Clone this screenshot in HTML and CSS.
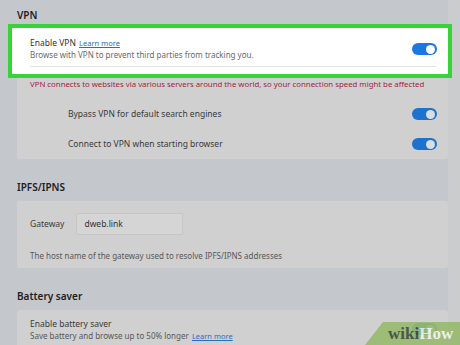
FILE: index.html
```html
<!DOCTYPE html>
<html lang="en">
<head>
    <meta charset="UTF-8">
    <meta name="viewport" content="width=device-width, initial-scale=1.0">
    <title>Settings</title>
    <link rel="stylesheet" href="styles.css">
</head>
<body>
<div class="layout">
    <div class="main">

        <!-- VPN -->
        <h2 class="heading">VPN</h2>
        <div class="card">
            <div class="row highlight">
                <div class="row-text">
                    <div class="title">Enable VPN <a class="link" href="#">Learn more</a></div>
                    <div class="desc">Browse with VPN to prevent third parties from tracking you.</div>
                </div>
                <span class="toggle on"></span>
                <div class="sep"></div>
            </div>
            <div class="note">VPN connects to websites via various servers around the world, so your connection speed might be affected</div>
            <div class="row sub">
                <span class="label">Bypass VPN for default search engines</span>
                <span class="toggle"></span>
            </div>
            <div class="row sub">
                <span class="label">Connect to VPN when starting browser</span>
                <span class="toggle"></span>
            </div>
        </div>

        <!-- IPFS -->
        <h2 class="heading spaced">IPFS/IPNS</h2>
        <div class="card padded">
            <div class="field">
                <span class="label">Gateway</span>
                <span class="input">dweb.link</span>
            </div>
            <div class="desc hint">The host name of the gateway used to resolve IPFS/IPNS addresses</div>
        </div>

        <!-- Battery -->
        <h2 class="heading spaced">Battery saver</h2>
        <div class="card battery">
            <div class="row-text">
                <div class="label">Enable battery saver</div>
                <div class="desc">Save battery and browse up to 50% longer <a class="link" href="#">Learn more</a></div>
            </div>
            <span class="toggle"></span>
        </div>

    </div>
    <div class="rail"></div>
</div>

<div class="watermark">
    <svg class="wm-bg" width="95" height="23" viewBox="0 0 95 23"><polygon points="0,23 18,0 95,0 95,23" fill="#98ba6e"/></svg>
    <span class="wm-text"><span class="wm-wiki">wiki</span><span class="wm-how">How</span></span>
</div>
</body>
</html>
```

FILE: styles.css
```css
body {
    margin: 0;
    background: #c4c7cb;
    font-family: "Noto Sans", "Open Sans", sans-serif;
    font-size: 8px;
    color: #3a3a3a;
    overflow: hidden;
}

.layout {
    display: flex;
    height: 345px;
}

.main {
    flex: 1;
    padding: 9px 0 0 17px;
}

.rail {
    width: 12px;
    background: #cbcccd;
}

.heading {
    margin: 0 0 3px 0;
    font-size: 10px;
    line-height: 12px;
    font-weight: 600;
    color: #1e1e1e;
}

.heading.spaced {
    margin-top: 22px;
    margin-bottom: 8px;
}

.card {
    background: #d0d0d0;
    border-radius: 3px;
}

.card.padded {
    padding: 12px 13px 6px 13px;
}

.row {
    display: flex;
    align-items: center;
    justify-content: space-between;
}

.highlight {
    position: relative;
    flex-wrap: wrap;
    margin: 0 -4px 0 -9px;
    padding: 9px 11px 0 18px;
    background: #ffffff;
    border: 4px solid #3ad23a;
}

.highlight .title {
    color: #333;
}

.highlight .desc {
    color: #6a6a6a;
}

.sep {
    flex-basis: 100%;
    height: 1px;
    margin: 5px 1px 7px 0;
    background: #e4e4e4;
}

.title, .label {
    line-height: 12px;
    font-size: 8.5px;
}

.desc {
    line-height: 12px;
    color: #585858;
}

.link {
    margin-left: 1px;
    color: #2b6ec0;
    font-size: 7.5px;
}

.note {
    padding-left: 13px;
    margin-bottom: 9px;
    line-height: 12px;
    font-size: 7.8px;
    color: #a2243a;
}

.sub {
    height: 30px;
    padding: 0 11px 0 51px;
}

.toggle {
    position: relative;
    width: 25px;
    height: 12px;
    border-radius: 6px;
    background: #1c72cf;
    flex-shrink: 0;
}

.toggle::after {
    content: "";
    position: absolute;
    right: 2px;
    top: 1.5px;
    width: 9px;
    height: 9px;
    border-radius: 50%;
    background: #d9dde4;
}

.toggle.on {
    background: #1a78e5;
}

.toggle.on::after {
    background: #ffffff;
}

.field {
    display: flex;
    align-items: center;
    gap: 12px;
}

.input {
    width: 98px;
    height: 20px;
    line-height: 20px;
    padding-left: 7px;
    background: #d5d5d5;
    border: 1px solid #c6c6c6;
    border-radius: 2px;
    font-size: 8.5px;
    color: #333;
}

.hint {
    margin-top: 15px;
}

.card.battery {
    display: flex;
    align-items: flex-start;
    justify-content: space-between;
    padding: 8px 11px 10px 13px;
}

.battery .toggle {
    margin-top: 5px;
}

.watermark {
    position: absolute;
    right: 0;
    bottom: 0;
    width: 95px;
    height: 23px;
    opacity: 0.9;
}

.wm-bg {
    position: absolute;
    left: 0;
    top: 0;
}

.wm-text {
    position: absolute;
    left: 23px;
    top: 2px;
    font-family: "Liberation Serif", "DejaVu Serif", serif;
    font-weight: bold;
    font-size: 17px;
    line-height: 20px;
}

.wm-wiki {
    color: #3d4a3a;
}

.wm-how {
    color: #f1f3ee;
}
```
